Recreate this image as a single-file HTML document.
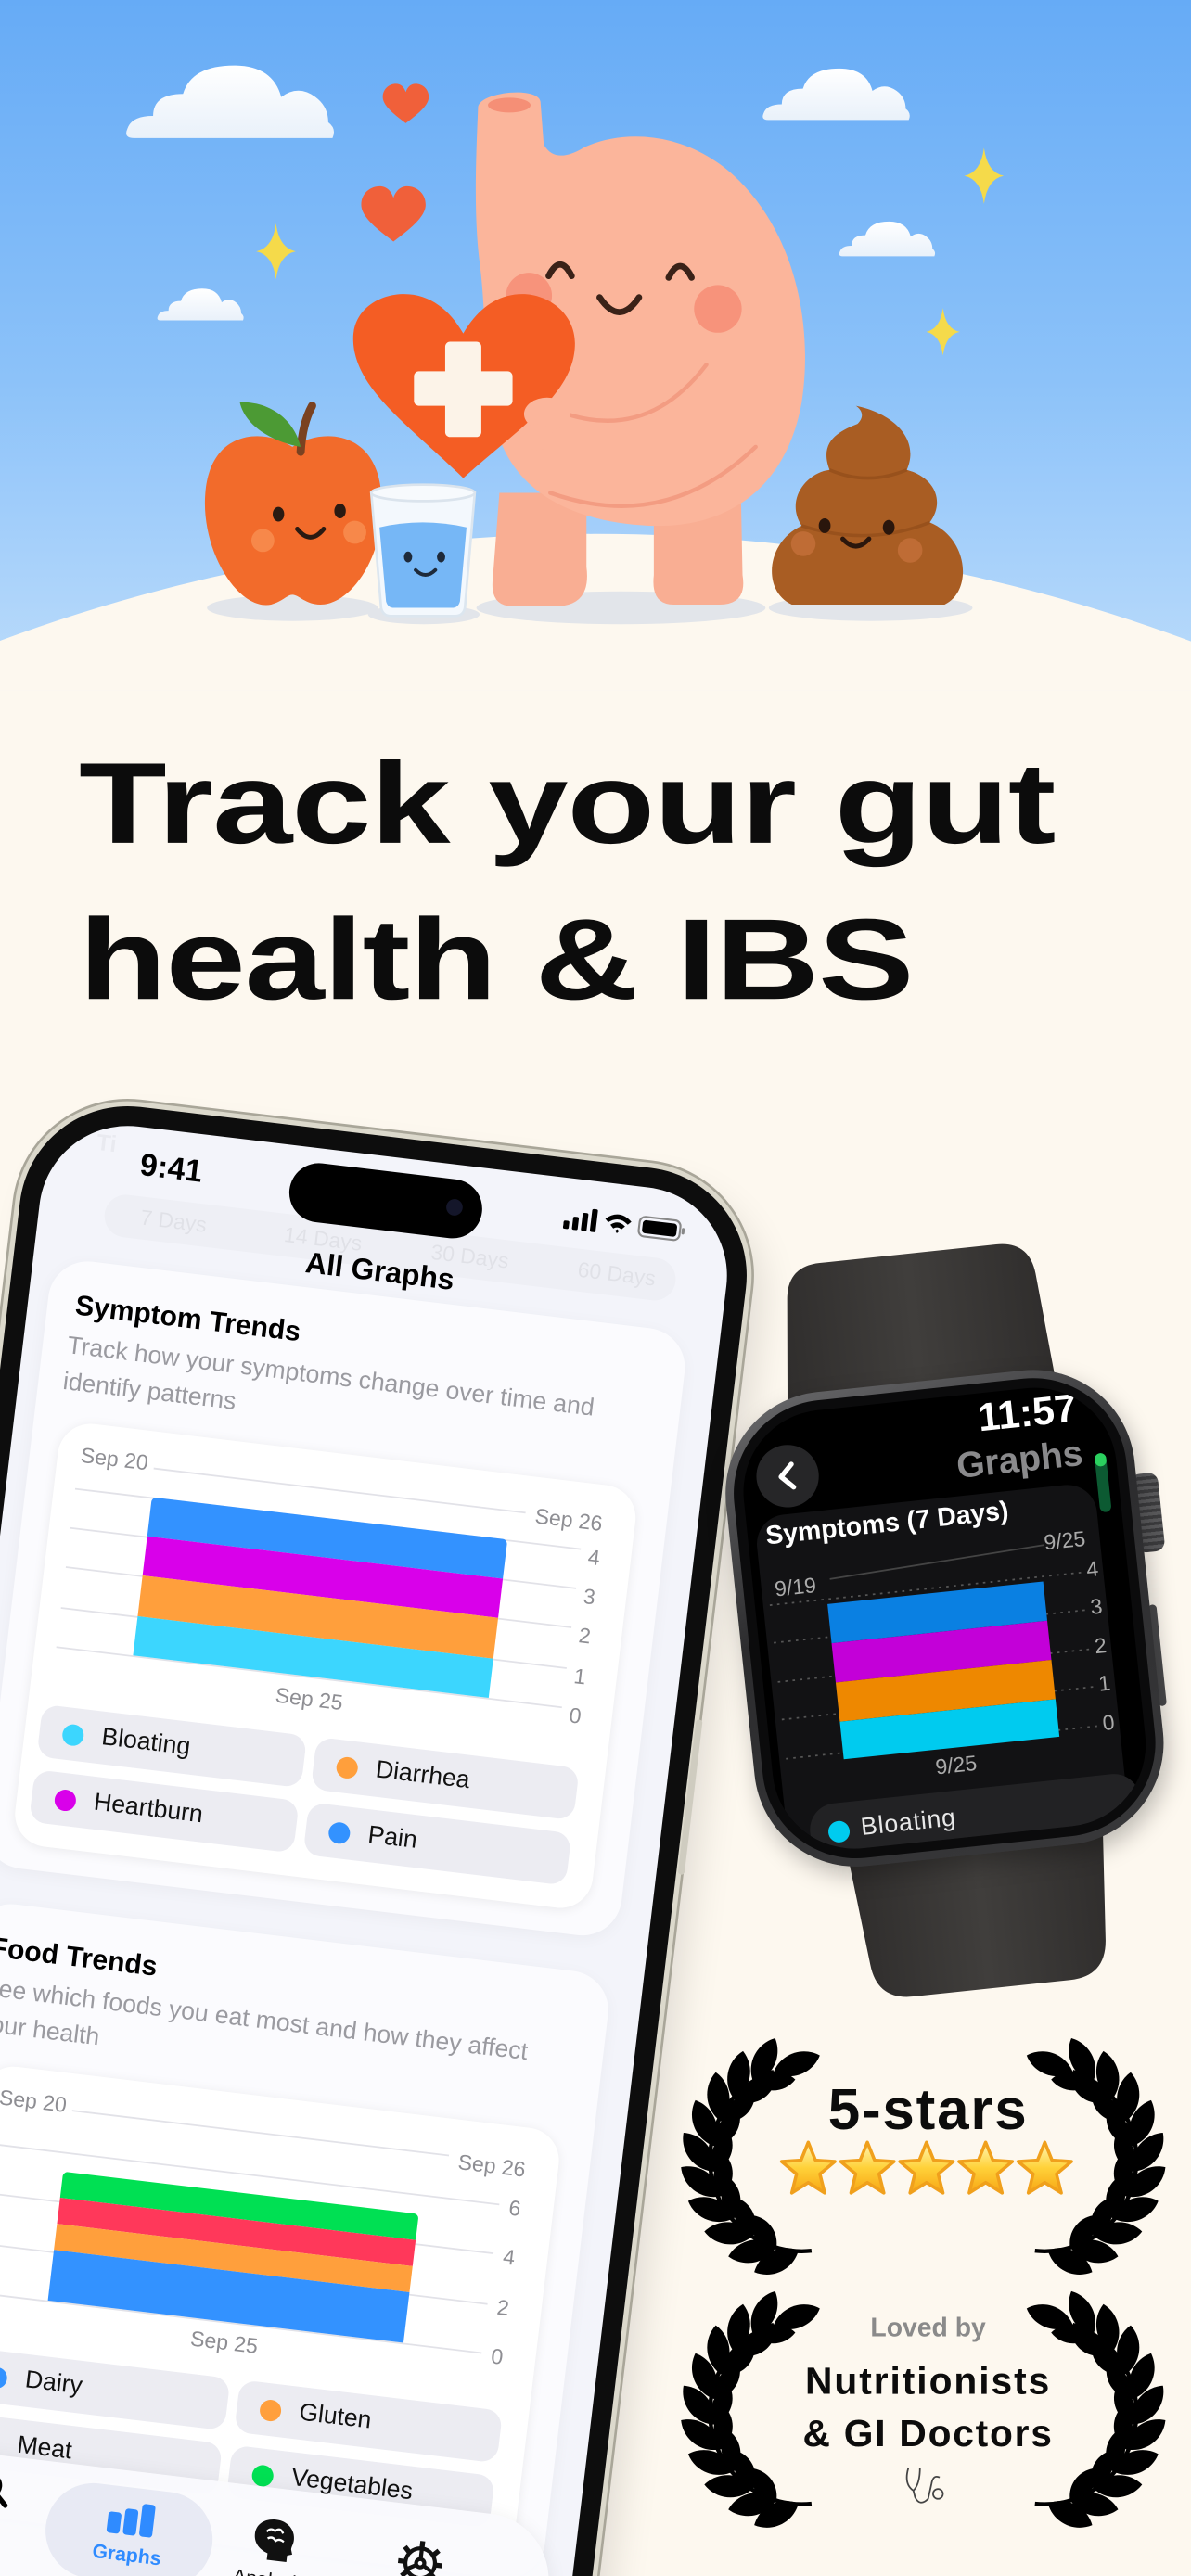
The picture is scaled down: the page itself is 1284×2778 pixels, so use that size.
<!DOCTYPE html>
<html><head><meta charset="utf-8">
<style>
html,body{margin:0;padding:0;background:#fdf8ef;width:1284px;height:2778px;overflow:hidden}
#s{position:absolute;left:0;top:0;width:725px;height:1568px;transform-origin:0 0;transform:scale(1.77103,1.7717);font-family:"Liberation Sans",sans-serif;overflow:hidden;background:#fdf8ef}
.a{position:absolute}
.h1{position:absolute;left:48px;font-weight:700;font-size:70px;line-height:70px;color:#0c0c0c;transform-origin:0 0;transform:scaleX(1.25);letter-spacing:-0.5px;white-space:nowrap}
.phone{position:absolute;left:20px;top:666px;width:445px;height:1000px;transform-origin:0 0;transform:rotate(6.8deg);border-radius:66px;background:#0d0d0d;box-shadow:0 0 0 3px #dcd9cc,0 0 0 4.5px #a9a699,10px 12px 24px rgba(0,0,0,.12)}
.scr{position:absolute;left:12px;top:12px;width:421px;height:976px;border-radius:54px;background:#f3f4fa;overflow:hidden}
.t{position:absolute;white-space:nowrap}
.card{position:absolute;background:#fbfbfe;border-radius:24px;box-shadow:0 2px 10px rgba(0,0,0,.04)}
.cc{position:absolute;background:#fff;border-radius:20px;box-shadow:0 1px 7px rgba(0,0,0,.07)}
.g{position:absolute;height:1px;background:#e2e2e8}
.gl{position:absolute;font-size:13px;color:#8e8e93;line-height:14px}
.pill{position:absolute;height:32px;border-radius:10px;background:#ececf2;font-size:15px;line-height:32px;color:#111}
.pill i{position:absolute;left:14px;top:9.5px;width:13px;height:13px;border-radius:50%}
.pill span{position:absolute;left:38px}
.b{position:absolute}
</style></head><body><div id="s">

<svg class="a" style="left:0;top:0" width="725" height="420" viewBox="0 0 725 420">
<defs>
<linearGradient id="sky" x1="0" y1="0" x2="0" y2="1"><stop offset="0" stop-color="#66abf6"/><stop offset="0.55" stop-color="#8cc2f9"/><stop offset="1" stop-color="#bcdcfb"/></linearGradient>
<linearGradient id="cl" x1="0" y1="0" x2="0" y2="1"><stop offset="0" stop-color="#ffffff"/><stop offset="1" stop-color="#e9f1fa"/></linearGradient>
<path id="cloud" d="M5,50 Q0,50 2,44 Q4,36 14,36 Q14,22 28,22 Q32,4 52,4 Q70,4 74,24 Q82,16 90,24 Q96,30 96,40 Q100,44 98,50 Z"/>
<path id="spk" d="M0,-17 Q2,-2 12,0 Q2,2 0,17 Q-2,2 -12,0 Q-2,-2 0,-17Z"/>
<path id="hrt" d="M0,10 C-8,4 -14,-1 -14,-6 C-14,-11 -10,-14 -6,-14 C-3,-14 -1,-12 0,-9 C1,-12 3,-14 6,-14 C10,-14 14,-11 14,-6 C14,-1 8,4 0,10Z"/>
</defs>
<rect width="725" height="420" fill="url(#sky)"/>
<g fill="url(#cl)">
<use href="#cloud" transform="translate(75,36) scale(1.3,0.96)"/>
<use href="#cloud" transform="translate(463,39) scale(0.92,0.68)"/>
<use href="#cloud" transform="translate(510,133) scale(0.6,0.46)"/>
<use href="#cloud" transform="translate(95,174) scale(0.54,0.42)"/>
</g>
<g fill="#f5da4a">
<use href="#spk" transform="translate(599,107)"/>
<use href="#spk" transform="translate(574,202) scale(0.85)"/>
<use href="#spk" transform="translate(168,153)"/>
</g>
<g fill="#f0603a">
<use href="#hrt" transform="translate(247,65)"/>
<use href="#hrt" transform="translate(239.5,133) scale(1.4)"/>
</g>
<circle cx="362" cy="1365" r="1040" fill="#fdf8ef"/>
<g fill="#e2e5ea">
<ellipse cx="178" cy="370" rx="52" ry="8"/>
<ellipse cx="258" cy="374" rx="34" ry="6"/>
<ellipse cx="378" cy="370" rx="88" ry="10"/>
<ellipse cx="530" cy="370" rx="62" ry="8"/>
</g>
<g fill="#f9ae93">
<path d="M304,300 L357,300 L357,345 Q360,368 340,369 L312,369 Q298,369 300,352 Z"/>
<path d="M398,300 L451,300 L452,350 Q455,368 438,368 L410,368 Q396,368 398,350 Z"/>
</g>
<path d="M291,66 C290,56 328,52 329,62 L331,88 C336,97 345,96 355,90 C380,78 420,80 450,110 C485,145 495,200 488,245 C478,300 440,322 395,320 C350,318 312,300 302,260 C294,220 296,190 292,160 C288,130 290,90 291,66 Z" fill="#fbb59b"/>
<ellipse cx="310" cy="64" rx="13" ry="4.5" fill="#f58f76"/>
<path d="M345,252 Q395,268 430,222" stroke="#f39c82" stroke-width="2.5" fill="none" stroke-linecap="round"/>
<path d="M335,300 Q405,325 460,272" stroke="#f39c82" stroke-width="2.5" fill="none" stroke-linecap="round"/>
<circle cx="322" cy="180" r="14" fill="#f7937b"/>
<circle cx="437" cy="188" r="14.5" fill="#f7937b"/>
<g stroke="#3a2218" stroke-width="3.8" fill="none" stroke-linecap="round">
<path d="M334,168 Q341,154 348,168"/>
<path d="M407,169 Q414,155 421,169"/>
<path d="M365,181 Q377,199 389,181"/>
</g>
<path d="M282,291 C248,258 215,236 215,206 C215,189 230,179 246,179 C262,179 274,189 282,203 C290,189 302,179 318,179 C334,179 350,191 350,209 C350,239 318,259 282,291Z" fill="#f45d24"/>
<rect x="271" y="208" width="22" height="58" rx="3" fill="#fcf3e8"/>
<rect x="252" y="226" width="60" height="21" rx="3" fill="#fcf3e8"/>
<ellipse cx="333" cy="252" rx="14" ry="10" fill="#fbb59b"/>
<ellipse cx="327" cy="266" rx="10" ry="8" fill="#fbb59b"/>
<path d="M178,272 C160,260 128,262 125,300 C122,335 145,372 165,368 C172,366 175,362 178,362 C182,362 186,368 195,368 C215,368 236,335 232,300 C229,262 196,260 178,272Z" fill="#f26b2b"/>
<path d="M183,275 Q184,258 190,247" stroke="#7a4221" stroke-width="5" fill="none" stroke-linecap="round"/>
<path d="M183,272 C171,270 150,262 146,245 C160,244 178,252 183,272Z" fill="#4c9a34"/>
<circle cx="160" cy="329" r="7" fill="#f7884a"/><circle cx="216" cy="324" r="7" fill="#f7884a"/>
<g fill="#2a1a12"><ellipse cx="169.5" cy="313" rx="3.5" ry="4.5"/><ellipse cx="207" cy="311" rx="3.5" ry="4.5"/></g>
<path d="M181,322 Q189,332 197,322" stroke="#2a1a12" stroke-width="2.8" fill="none" stroke-linecap="round"/>
<path d="M226,300 L232,370 Q233,375 238,375 L277,375 Q282,375 283,370 L289,300 Z" fill="#f3f8fd" stroke="#dce6ef" stroke-width="1.5"/>
<path d="M231,321 Q257,315 284,321 L280,366 Q279,370 275,370 L240,370 Q236,370 235,366 Z" fill="#76b7f6"/>
<ellipse cx="257.5" cy="300" rx="31.5" ry="5" fill="#f7fafd" stroke="#dbe4ed" stroke-width="1.5"/>
<g fill="#1e2a3a"><ellipse cx="248.4" cy="339" rx="2.5" ry="3.3"/><ellipse cx="268.5" cy="339" rx="2.5" ry="3.3"/></g>
<path d="M253,347 Q259,353 265,347" stroke="#1e2a3a" stroke-width="2.2" fill="none" stroke-linecap="round"/>
<path d="M482,368 C464,360 466,330 488,320 C478,305 490,288 505,286 C498,268 512,262 522,258 C527,253 524,249 521,247 C545,252 560,268 552,286 C570,291 575,306 566,318 C590,328 592,360 575,368 Z" fill="#a95d23"/>
<path d="M505,286 Q528,296 552,286" stroke="#8e4a18" stroke-width="2" fill="none" opacity=".6"/>
<path d="M488,320 Q528,333 566,318" stroke="#8e4a18" stroke-width="2" fill="none" opacity=".6"/>
<circle cx="489" cy="331" r="7.5" fill="#bf6c35"/><circle cx="554" cy="335" r="7.5" fill="#bf6c35"/>
<g fill="#2a160c"><ellipse cx="502" cy="320" rx="3.6" ry="4.5"/><ellipse cx="541" cy="321" rx="3.6" ry="4.5"/></g>
<path d="M513,328 Q521,337 529,328" stroke="#2a160c" stroke-width="2.8" fill="none" stroke-linecap="round"/>
</svg>

<div class="h1" style="top:454px">Track your gut</div>
<div class="h1" style="top:549px">health &amp; IBS</div>

<div class="phone">
 <div class="b" style="right:-5px;top:330px;width:4px;height:95px;border-radius:2px;background:#cfccc0"></div>
 <div class="scr">
  <div class="t" style="left:30px;top:4px;font-size:14px;color:#000;opacity:.04;font-weight:700">Ti</div>
  <div class="t" style="left:40px;top:42px;width:350px;height:26px;border-radius:13px;background:#000;opacity:.02"></div>
  <div class="t" style="left:62px;top:47px;font-size:13px;color:#000;opacity:.05">7 Days</div>
  <div class="t" style="left:150px;top:47px;font-size:13px;color:#000;opacity:.05">14 Days</div>
  <div class="t" style="left:240px;top:47px;font-size:13px;color:#000;opacity:.05">30 Days</div>
  <div class="t" style="left:330px;top:47px;font-size:13px;color:#000;opacity:.05">60 Days</div>

  <div class="t" style="left:58px;top:12px;font-size:19px;font-weight:700;line-height:24px;color:#000">9:41</div>
  <div class="t" style="left:150px;top:9px;width:118px;height:36px;border-radius:18px;background:#000"></div>
  <div class="t" style="left:246px;top:21px;width:10px;height:10px;border-radius:50%;background:#14162a"></div>
  <svg class="t" style="left:318px;top:16px" width="80" height="16" viewBox="0 0 80 16">
   <rect x="0" y="10" width="3.5" height="5" rx="1" fill="#000"/><rect x="5.5" y="7" width="3.5" height="8" rx="1" fill="#000"/><rect x="11" y="4" width="3.5" height="11" rx="1" fill="#000"/><rect x="16.5" y="1" width="3.5" height="14" rx="1" fill="#000"/>
   <path d="M25,6 Q33,-1 41,6 L39,8 Q33,3 27,8Z M28.5,9.3 Q33,5.5 37.5,9.3 L35.5,11.3 Q33,9.5 30.5,11.3Z M31.8,12.5 L33,11.5 L34.2,12.5 L33,14Z" fill="#000"/>
   <rect x="46" y="2" width="25" height="12" rx="3.5" fill="none" stroke="#888" stroke-width="1.2"/><rect x="48" y="4" width="21" height="8" rx="2" fill="#000"/><rect x="72" y="6" width="1.8" height="4" rx="1" fill="#888"/>
  </svg>
  <div class="t" style="left:0;width:421px;text-align:center;top:58px;font-size:18px;font-weight:700;line-height:24px;color:#000">All Graphs</div>

  <div class="card" style="left:12px;top:85px;width:390px;height:372px"></div>
  <div class="t" style="left:29px;top:102px;font-size:17px;font-weight:700;line-height:22px;color:#000">Symptom Trends</div>
  <div class="t" style="left:27px;top:127px;font-size:15px;line-height:22px;color:#9a9aa0">Track how your symptoms change over time and<br>identify patterns</div>
  <div class="cc" style="left:29px;top:183px;width:354px;height:259px"></div>
  <div class="gl" style="left:43px;top:196px">Sep 20</div>
  <div class="g" style="left:88px;top:205px;width:228px"></div>
  <div class="gl" style="left:322px;top:200px">Sep 26</div>
  <div class="g" style="left:42px;top:223px;width:310px"></div>
  <div class="g" style="left:42px;top:247px;width:310px"></div>
  <div class="g" style="left:42px;top:271px;width:310px"></div>
  <div class="g" style="left:42px;top:296px;width:310px"></div>
  <div class="g" style="left:42px;top:320px;width:310px"></div>
  <div class="gl" style="left:357px;top:221px">4</div>
  <div class="gl" style="left:357px;top:245px">3</div>
  <div class="gl" style="left:357px;top:269px">2</div>
  <div class="gl" style="left:357px;top:294px">1</div>
  <div class="gl" style="left:357px;top:318px">0</div>
  <div class="b" style="left:89px;top:223px;width:218px;height:24px;background:#3392ff;border-radius:3px 3px 0 0"></div>
  <div class="b" style="left:89px;top:247px;width:218px;height:24px;background:#d900ea"></div>
  <div class="b" style="left:89px;top:271px;width:218px;height:25px;background:#ff9f3c"></div>
  <div class="b" style="left:89px;top:296px;width:218px;height:24px;background:#3cd6fe"></div>
  <div class="gl" style="left:178px;top:327px">Sep 25</div>
  <div class="pill" style="left:38px;top:356px;width:162px"><i style="background:#3cd6fe"></i><span>Bloating</span></div>
  <div class="pill" style="left:206px;top:356px;width:161px"><i style="background:#ff9f3c"></i><span>Diarrhea</span></div>
  <div class="pill" style="left:38px;top:396px;width:162px"><i style="background:#d900ea"></i><span>Heartburn</span></div>
  <div class="pill" style="left:206px;top:396px;width:161px"><i style="background:#3392ff"></i><span>Pain</span></div>

  <div class="card" style="left:12px;top:479px;width:390px;height:372px"></div>
  <div class="t" style="left:24px;top:496px;font-size:17px;font-weight:700;line-height:22px;color:#000">Food Trends</div>
  <div class="t" style="left:22px;top:521px;font-size:15px;line-height:22px;color:#9a9aa0">See which foods you eat most and how they affect<br>your health</div>
  <div class="cc" style="left:29px;top:577px;width:354px;height:259px"></div>
  <div class="gl" style="left:40px;top:590px">Sep 20</div>
  <div class="g" style="left:85px;top:599px;width:231px"></div>
  <div class="gl" style="left:322px;top:596px">Sep 26</div>
  <div class="g" style="left:38px;top:625px;width:312px"></div>
  <div class="g" style="left:38px;top:655px;width:312px"></div>
  <div class="g" style="left:38px;top:686px;width:312px"></div>
  <div class="g" style="left:38px;top:716px;width:312px"></div>
  <div class="gl" style="left:356px;top:620px">6</div>
  <div class="gl" style="left:356px;top:650px">4</div>
  <div class="gl" style="left:356px;top:681px">2</div>
  <div class="gl" style="left:356px;top:711px">0</div>
  <div class="b" style="left:84px;top:637px;width:218px;height:16px;background:#00e053;border-radius:3px 3px 0 0"></div>
  <div class="b" style="left:84px;top:653px;width:218px;height:16px;background:#ff385a"></div>
  <div class="b" style="left:84px;top:669px;width:218px;height:16px;background:#ff9f3c"></div>
  <div class="b" style="left:84px;top:685px;width:218px;height:31px;background:#3392ff"></div>
  <div class="gl" style="left:173px;top:722px">Sep 25</div>
  <div class="pill" style="left:38px;top:750px;width:162px"><i style="background:#3392ff"></i><span>Dairy</span></div>
  <div class="pill" style="left:206px;top:750px;width:161px"><i style="background:#ff9f3c"></i><span>Gluten</span></div>
  <div class="pill" style="left:38px;top:790px;width:162px"><i style="background:#ff385a"></i><span>Meat</span></div>
  <div class="pill" style="left:206px;top:790px;width:161px"><i style="background:#00e053"></i><span>Vegetables</span></div>

  <div class="b" style="left:15px;top:813px;width:392px;height:80px;border-radius:40px;background:rgba(250,250,253,.94);box-shadow:0 2px 12px rgba(0,0,0,.08)"></div>
  <svg class="b" style="left:52px;top:822px" width="24" height="24" viewBox="0 0 24 24"><circle cx="10" cy="10" r="6.5" fill="none" stroke="#000" stroke-width="2.5"/><path d="M15,15 L21,21" stroke="#000" stroke-width="3" stroke-linecap="round"/></svg>
  <div class="b" style="left:99px;top:823px;width:102px;height:58px;border-radius:29px;background:#e8eaf4"></div>
  <svg class="b" style="left:135px;top:831px" width="30" height="22" viewBox="0 0 30 22"><rect x="1" y="8" width="8" height="13" rx="2" fill="#2f8bff"/><rect x="11" y="5" width="8" height="16" rx="2" fill="#2f8bff"/><rect x="21" y="1" width="8" height="20" rx="2" fill="#2f8bff"/></svg>
  <div class="t" style="left:99px;width:102px;text-align:center;top:857px;font-size:12px;font-weight:700;color:#2f8bff">Graphs</div>
  <svg class="b" style="left:225px;top:831px" width="26" height="28" viewBox="0 0 26 28"><path d="M13,1 C20,1 25,6 25,12 C25,15 24,16 24,18 L25,21 L22,22 L22,26 L10,26 L10,22 C4,20 1,16 1,11 C1,5 6,1 13,1Z" fill="#111"/><path d="M8,9 Q10,6 13,8 Q16,5 18,9 M9,13 Q12,11 14,14 Q16,12 19,14" stroke="#fff" stroke-width="1.3" fill="none"/></svg>
  <div class="t" style="left:210px;width:56px;text-align:center;top:862px;font-size:12px;font-weight:400;color:#111">Analysis</div>
  <svg class="b" style="left:314px;top:834px" width="28" height="28" viewBox="0 0 28 28"><g stroke="#111" stroke-width="2.4" fill="none"><circle cx="14" cy="14" r="9"/><circle cx="14" cy="14" r="2.5"/><path d="M14,11.5 L14,5 M11.8,15.3 L6.2,18.5 M16.2,15.3 L21.8,18.5"/></g><g fill="#111"><rect x="12.5" y="0.5" width="3" height="4"/><rect x="12.5" y="23.5" width="3" height="4"/><rect x="0.5" y="12.5" width="4" height="3"/><rect x="23.5" y="12.5" width="4" height="3"/><rect x="3.5" y="4.5" width="3" height="4" transform="rotate(-45 5 6.5)"/><rect x="21.5" y="4.5" width="3" height="4" transform="rotate(45 23 6.5)"/><rect x="3.5" y="19.5" width="3" height="4" transform="rotate(45 5 21.5)"/><rect x="21.5" y="19.5" width="3" height="4" transform="rotate(-45 23 21.5)"/></g></svg>
 </div>
</div>

<div class="a" style="left:450px;top:840px;width:250px;height:290px;transform:rotate(-6deg);transform-origin:125px 145px">
 <svg class="a" style="left:0;top:0;overflow:visible" width="250" height="290" viewBox="0 0 250 290">
  <defs><linearGradient id="band" x1="0" y1="0" x2="1" y2="0"><stop offset="0" stop-color="#2f2d2c"/><stop offset=".5" stop-color="#403e3c"/><stop offset="1" stop-color="#2f2d2c"/></linearGradient></defs>
  <path d="M40,40 L50,-58 Q52,-78 72,-78 L180,-78 Q200,-78 202,-58 L210,40 Z" fill="url(#band)"/>
  <path d="M48,250 L58,350 Q60,372 82,372 L178,372 Q200,372 202,350 L210,250 Z" fill="url(#band)"/>
 </svg>
 <div class="a" style="right:-13px;top:70px;width:17px;height:48px;border-radius:6px;background:repeating-linear-gradient(0deg,#3c3c3e 0 2px,#5a5a5c 2px 4px)"></div>
 <div class="a" style="right:-4px;top:150px;width:5px;height:62px;border-radius:3px;background:#4a4a4c"></div>
 <div class="a" style="left:0;top:0;width:250px;height:290px;border-radius:62px;background:linear-gradient(160deg,#6a6a6c,#2c2c2e 40%,#38383a);box-shadow:2px 6px 14px rgba(0,0,0,.25)"></div>
 <div class="a" style="left:5px;top:5px;width:240px;height:280px;border-radius:57px;background:#0b0b0c"></div>
 <div class="a" style="left:11px;top:11px;width:228px;height:268px;border-radius:50px;background:#000;overflow:hidden">
  <div class="a" style="left:-11px;top:-11px;width:250px;height:290px">
   <div class="t" style="left:158px;top:13px;font-size:24px;font-weight:700;color:#fff;line-height:28px">11:57</div>
   <div class="a" style="left:20px;top:30px;width:38px;height:38px;border-radius:50%;background:#262628"></div>
   <svg class="a" style="left:30px;top:39px" width="18" height="20" viewBox="0 0 18 20"><path d="M12,3 L5,10 L12,17" stroke="#fff" stroke-width="3" fill="none" stroke-linecap="round" stroke-linejoin="round"/></svg>
   <div class="t" style="left:142px;top:40px;font-size:22px;font-weight:700;color:#8a8a8c;line-height:28px">Graphs</div>
   <div class="a" style="left:226px;top:55px;width:7px;height:36px;border-radius:4px;background:#0c5a32"></div>
   <div class="a" style="left:226px;top:55px;width:7px;height:8px;border-radius:4px;background:#2bd05f"></div>
   <div class="a" style="left:16px;top:72px;width:208px;height:220px;border-radius:18px;background:#121214"></div>
   <div class="t" style="left:22px;top:75px;font-size:16px;font-weight:700;color:#fff;line-height:20px">Symptoms (7 Days)</div>
   <div class="t" style="left:190px;top:98px;font-size:13px;color:#aaa">9/25</div>
   <div class="t" style="left:24px;top:109px;font-size:13px;color:#aaa">9/19</div>
   <svg class="a" style="left:0;top:0" width="250" height="290"><path d="M58,114 L190,107" stroke="#444" stroke-width="1"/><g stroke="#555" stroke-dasharray="1.5 3" stroke-width="1"><path d="M20,126 L212,126 M20,149 L212,149 M20,173 L212,173 M20,196 L212,196 M20,220 L212,220"/></g></svg>
   <div class="t" style="left:214px;top:117px;font-size:13px;color:#aaa">4</div>
   <div class="t" style="left:214px;top:140px;font-size:13px;color:#aaa">3</div>
   <div class="t" style="left:214px;top:164px;font-size:13px;color:#aaa">2</div>
   <div class="t" style="left:214px;top:187px;font-size:13px;color:#aaa">1</div>
   <div class="t" style="left:214px;top:211px;font-size:13px;color:#aaa">0</div>
   <div class="a" style="left:55px;top:129px;width:132px;height:24px;background:#0a80e2"></div>
   <div class="a" style="left:55px;top:153px;width:132px;height:24px;background:#c300d8"></div>
   <div class="a" style="left:55px;top:177px;width:132px;height:24px;background:#ee8800"></div>
   <div class="a" style="left:55px;top:201px;width:132px;height:23px;background:#00cbef"></div>
   <div class="t" style="left:110px;top:227px;font-size:13px;color:#aaa">9/25</div>
   <div class="a" style="left:30px;top:250px;width:202px;height:40px;border-radius:16px;background:#222224"></div>
   <div class="a" style="left:41px;top:261px;width:13px;height:13px;border-radius:50%;background:#00cbef"></div>
   <div class="t" style="left:61px;top:258px;font-size:15px;color:#e8e8e8;letter-spacing:.5px">Bloating</div>
  </div>
 </div>
</div>

<svg class="a" style="left:0;top:0" width="725" height="1568" viewBox="0 0 725 1568">
<defs>
<path id="lf" d="M0,0 C-9,-8 -9,-22 0,-30 C9,-22 9,-8 0,0Z"/>
<g id="br">
 <g transform="rotate(250) translate(56 0)"><use href="#lf" transform="rotate(180)"/></g>
 <g transform="rotate(236) translate(56 0)"><use href="#lf" transform="rotate(150)"/><use href="#lf" transform="rotate(210) scale(.85)"/></g>
 <g transform="rotate(220) translate(56 0)"><use href="#lf" transform="rotate(150)"/><use href="#lf" transform="rotate(210) scale(.85)"/></g>
 <g transform="rotate(204) translate(56 0)"><use href="#lf" transform="rotate(150)"/><use href="#lf" transform="rotate(210) scale(.85)"/></g>
 <g transform="rotate(188) translate(56 0)"><use href="#lf" transform="rotate(150)"/><use href="#lf" transform="rotate(210) scale(.85)"/></g>
 <g transform="rotate(172) translate(56 0)"><use href="#lf" transform="rotate(150)"/><use href="#lf" transform="rotate(210) scale(.85)"/></g>
 <g transform="rotate(156) translate(56 0)"><use href="#lf" transform="rotate(150)"/><use href="#lf" transform="rotate(210) scale(.85)"/></g>
 <g transform="rotate(140) translate(56 0)"><use href="#lf" transform="rotate(150)"/><use href="#lf" transform="rotate(210) scale(.85)"/></g>
 <g transform="rotate(124) translate(56 0)"><use href="#lf" transform="rotate(150)"/><use href="#lf" transform="rotate(210) scale(.85)"/></g>
 <g transform="rotate(108) translate(56 0)"><use href="#lf" transform="rotate(150)"/><use href="#lf" transform="rotate(210) scale(.85)"/></g>
 <g transform="rotate(94) translate(56 0)"><use href="#lf" transform="rotate(150)"/></g>
 <path d="M-19,-53 A56,56 0 0 0 4,56" stroke="#000" stroke-width="2.5" fill="none"/>
</g>
<linearGradient id="st" x1="0" y1="0" x2="0" y2="1"><stop offset="0" stop-color="#fff7b8"/><stop offset=".5" stop-color="#ffd23a"/><stop offset="1" stop-color="#f7a614"/></linearGradient>
<polygon id="star" points="0,-17 4.4,-6.1 16.2,-5.3 7.1,2.3 10,13.8 0,7.5 -10,13.8 -7.1,2.3 -16.2,-5.3 -4.4,-6.1" fill="url(#st)" stroke="#f0a01c" stroke-width="2" stroke-linejoin="round"/>
</defs>
<g fill="#000">
 <use href="#br" transform="translate(490 1314)"/>
 <use href="#br" transform="translate(634 1314) scale(-1 1)"/>
 <use href="#br" transform="translate(490 1468)"/>
 <use href="#br" transform="translate(634 1468) scale(-1 1)"/>
</g>
<use href="#star" transform="translate(492 1321)"/>
<use href="#star" transform="translate(528 1321)"/>
<use href="#star" transform="translate(564 1321)"/>
<use href="#star" transform="translate(600 1321)"/>
<use href="#star" transform="translate(636 1321)"/>
<g stroke="#444" stroke-width="1" fill="none">
 <path d="M553,1502 Q550,1512 556,1516 Q560,1512 560,1502"/>
 <path d="M556,1516 L557,1520 Q560,1526 565,1521 L567,1512 Q568,1506 572,1508"/>
 <circle cx="571" cy="1518" r="3"/>
</g>
</svg>
<div class="t" style="left:465px;width:200px;text-align:center;top:1265px;font-size:35px;font-weight:700;line-height:40px;color:#0c0c0c;letter-spacing:1px">5-stars</div>
<div class="t" style="left:465px;width:200px;text-align:center;top:1408px;font-size:16px;font-weight:700;line-height:20px;color:#8a8a8a">Loved by</div>
<div class="t" style="left:445px;width:240px;text-align:center;top:1435px;font-size:23px;font-weight:700;line-height:28px;color:#0c0c0c;letter-spacing:1.1px">Nutritionists</div>
<div class="t" style="left:445px;width:240px;text-align:center;top:1467px;font-size:23px;font-weight:700;line-height:28px;color:#0c0c0c;letter-spacing:1px">&amp; GI Doctors</div>

</div></body></html>
